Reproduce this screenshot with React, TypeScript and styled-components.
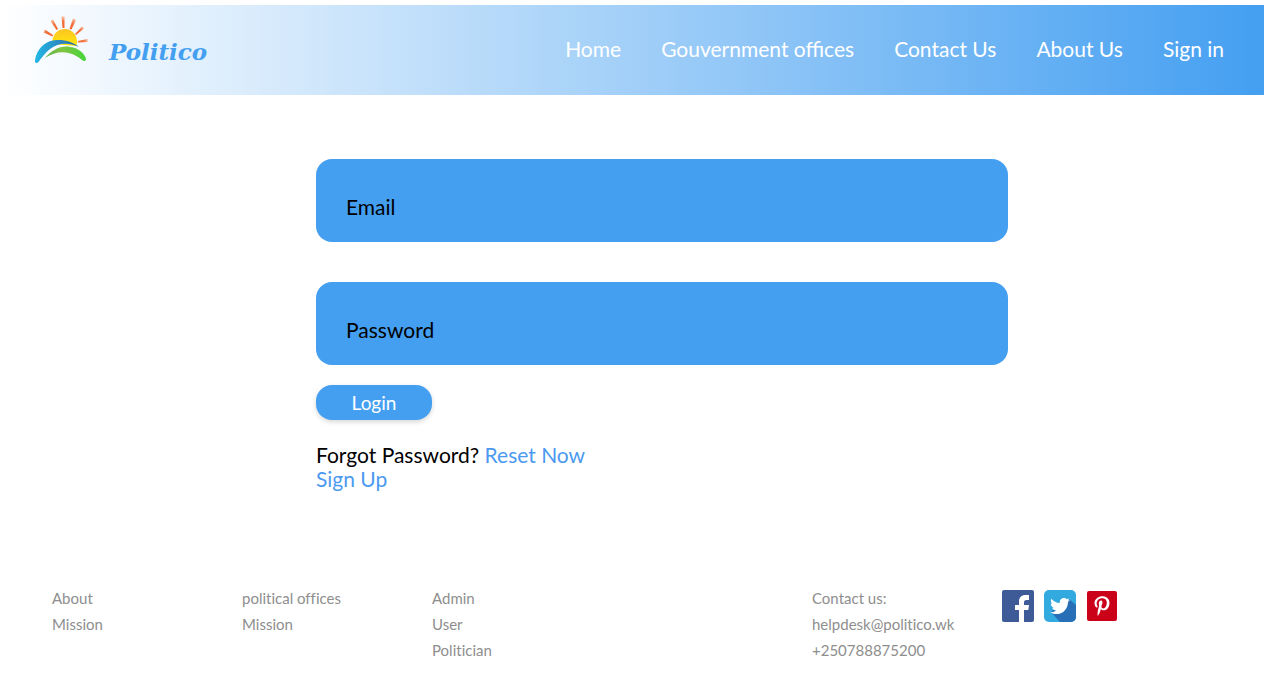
import React from "react";
import styled, { createGlobalStyle } from "styled-components";
import { FaPinterestP, FaTwitter } from "react-icons/fa";

const BLUE = "#449ff1";

const GlobalStyle = createGlobalStyle`
  *, *::before, *::after { box-sizing: border-box; }
  body {
    margin: 0;
    background: #fff;
    color: #000;
    font-family: Lato, "Liberation Sans", sans-serif;
    font-size: 21px;
    line-height: 24px;
  }
`;

const Page = styled.div`
  padding: 5px 4px 0 0;
`;

const Header = styled.header`
  display: flex;
  align-items: center;
  justify-content: space-between;
  height: 90px;
  padding: 0 40px 0 34px;
  background: linear-gradient(to right, #fff, ${BLUE});
`;

const Brand = styled.a`
  display: flex;
  align-items: center;
  gap: 20px;
  padding-bottom: 20px;
  text-decoration: none;
`;

const BrandName = styled.span`
  padding-top: 24px;
  color: ${BLUE};
  font: italic bold 23px/28px Georgia, "DejaVu Serif", serif;
`;

const Nav = styled.nav`
  display: flex;
  gap: 40px;
  padding-bottom: 2px;
`;

const NavLink = styled.a`
  color: #fff;
  text-decoration: none;
  white-space: nowrap;
`;

const Main = styled.main`
  width: 55%;
  max-width: 692px;
  margin: 64px 0 0 25%;
`;

const Form = styled.form`
  display: flex;
  flex-direction: column;
  align-items: flex-start;
`;

const Field = styled.input`
  width: 100%;
  height: 83px;
  margin-bottom: 40px;
  padding: 12px 30px 0;
  border: 0;
  border-radius: 16px;
  background: ${BLUE};
  color: #000;
  font: inherit;

  &::placeholder {
    color: #000;
    opacity: 1;
  }

  &:last-of-type {
    margin-bottom: 20px;
  }
`;

const LoginButton = styled.button`
  width: 116px;
  height: 35px;
  padding: 0;
  border: 0;
  border-radius: 16px;
  background: ${BLUE};
  box-shadow: 0 2px 5px rgba(0, 0, 0, 0.16);
  color: #fff;
  font: inherit;
  font-size: 19px;
  cursor: pointer;
`;

const Help = styled.p`
  margin: 23px 0 0;
`;

const HelpLink = styled.a`
  color: #4c9af0;
  text-decoration: none;
`;

const Footer = styled.footer`
  display: grid;
  grid-template-columns: repeat(6, 1fr);
  margin-top: 94px;
  padding: 0 72px 0 52px;
  color: #8e8e8e;
  font-size: 15px;
  font-variant-ligatures: none;
  line-height: 26px;
`;

const Column = styled.ul<{ $start?: number }>`
  grid-column-start: ${(p) => p.$start ?? "auto"};
  margin: 0;
  padding: 0;
  list-style: none;
  white-space: nowrap;
`;

const FooterLink = styled.a`
  color: inherit;
  text-decoration: none;
`;

const Social = styled.div`
  display: flex;
  gap: 10px;
  padding-top: 5px;
`;

const SocialLink = styled.a`
  display: block;
  height: 32px;

  svg {
    display: block;
  }
`;

const Logo = () => (
  <svg width="55" height="50" viewBox="0 0 55 50" aria-hidden="true">
    <defs>
      <linearGradient id="sun" x1="0" y1="0" x2="0" y2="1">
        <stop offset="0" stopColor="#fcc324" />
        <stop offset="1" stopColor="#ffe80c" />
      </linearGradient>
      <linearGradient id="wave">
        <stop offset="0" stopColor="#22b8e8" />
        <stop offset="0.5" stopColor="#2b8ec4" />
        <stop offset="1" stopColor="#2e68a8" />
      </linearGradient>
      <linearGradient id="hill">
        <stop offset="0" stopColor="#5fb04a" />
        <stop offset="0.4" stopColor="#82c341" />
        <stop offset="1" stopColor="#47d53c" />
      </linearGradient>
      <radialGradient id="ray" gradientUnits="userSpaceOnUse" cx="30" cy="26" r="26">
        <stop offset="0.5" stopColor="#f6642c" />
        <stop offset="0.75" stopColor="#f2703c" />
        <stop offset="1" stopColor="#f8b48c" stopOpacity="0.6" />
      </radialGradient>
    </defs>
    <g fill="url(#ray)">
      <path d="M18.500 21.500 9.500 17.500 11 14.500 19 20Z" />
      <path d="M22.500 15 16.500 6 19 4.500 24 14Z" />
      <path d="M28.500 13 27.500 1.500H30.500L30.500 13Z" />
      <path d="M35.500 14 39 3.500 42 5 37.500 14.500Z" />
      <path d="M41 19 48 11.500 50 13.500 42 20Z" />
      <path d="M44 26 53.500 24V27L44 27.500Z" />
    </g>
    <path d="M18.500 29A12.400 13 0 1 1 42.500 31Z" fill="url(#sun)" />
    <path
      d="M1 45C3 34 10 27 19 25.500C28 24 38 26 45 32C34 27 24 28 16 34C11 38 8 42 4.500 47C2.500 49 .5 48 1 45Z"
      fill="url(#wave)"
    />
    <path
      d="M11 43C18 35 27 30 36 32C45 33 51 39 52 44C52 46 50 47 48 45C38 36 24 34 11 43Z"
      fill="url(#hill)"
    />
  </svg>
);

const FacebookIcon = () => (
  <svg width="32" height="32" viewBox="0 0 32 32" aria-hidden="true">
    <rect width="32" height="32" rx="2" fill="#3e5b98" />
    <path
      d="M17 32V20h-4v-5h4v-3.500C17 7.500 19.500 5 23.500 5H27v5h-2.500C22.600 10 22 10.900 22 12.500V15h5l-.7 5H22v12Z"
      fill="#fff"
    />
  </svg>
);

const TwitterIcon = () => (
  <svg width="32" height="32" viewBox="0 0 32 32" aria-hidden="true">
    <clipPath id="tile">
      <rect width="32" height="32" rx="5" />
    </clipPath>
    <g clipPath="url(#tile)">
      <rect width="32" height="32" fill="#32a9df" />
      <path d="M7 22 25 9 32 15V32H16Z" fill="#286fb8" />
    </g>
    <FaTwitter x="6" y="6" size={20} color="#fff" />
  </svg>
);

const PinterestIcon = () => (
  <svg width="32" height="32" viewBox="0 0 32 32" aria-hidden="true">
    <rect x="1" y="1" width="30" height="30" rx="2" fill="#cb0019" />
    <FaPinterestP x="6" y="6" size={20} color="#fff" />
  </svg>
);

const navItems = ["Home", "Gouvernment offices", "Contact Us", "About Us", "Sign in"];

const footerColumns = [
  { start: 1, items: ["About", "Mission"] },
  { start: 2, items: ["political offices", "Mission"] },
  { start: 3, items: ["Admin", "User", "Politician"] },
];

const socials = [
  { name: "Facebook", Icon: FacebookIcon },
  { name: "Twitter", Icon: TwitterIcon },
  { name: "Pinterest", Icon: PinterestIcon },
];

export default function App() {
  return (
    <Page>
      <GlobalStyle />
      <Header>
        <Brand href="#">
          <Logo />
          <BrandName>Politico</BrandName>
        </Brand>
        <Nav>
          {navItems.map((item) => (
            <NavLink href="#" key={item}>{item}</NavLink>
          ))}
        </Nav>
      </Header>
      <Main>
        <Form onSubmit={(e) => e.preventDefault()}>
          <Field type="email" placeholder="Email" aria-label="Email" />
          <Field type="password" placeholder="Password" aria-label="Password" />
          <LoginButton type="submit">Login</LoginButton>
        </Form>
        <Help>
          Forgot Password? <HelpLink href="#">Reset Now</HelpLink>
          <br />
          <HelpLink href="#">Sign Up</HelpLink>
        </Help>
      </Main>
      <Footer>
        {footerColumns.map(({ start, items }) => (
          <Column key={start} $start={start}>
            {items.map((item) => (
              <li key={item}><FooterLink href="#">{item}</FooterLink></li>
            ))}
          </Column>
        ))}
        <Column $start={5}>
          <li>Contact us:</li>
          <li><FooterLink href="mailto:helpdesk@politico.wk">helpdesk@politico.wk</FooterLink></li>
          <li><FooterLink href="tel:+250788875200">+250788875200</FooterLink></li>
        </Column>
        <Social>
          {socials.map(({ name, Icon }) => (
            <SocialLink href="#" aria-label={name} key={name}><Icon /></SocialLink>
          ))}
        </Social>
      </Footer>
    </Page>
  );
}
